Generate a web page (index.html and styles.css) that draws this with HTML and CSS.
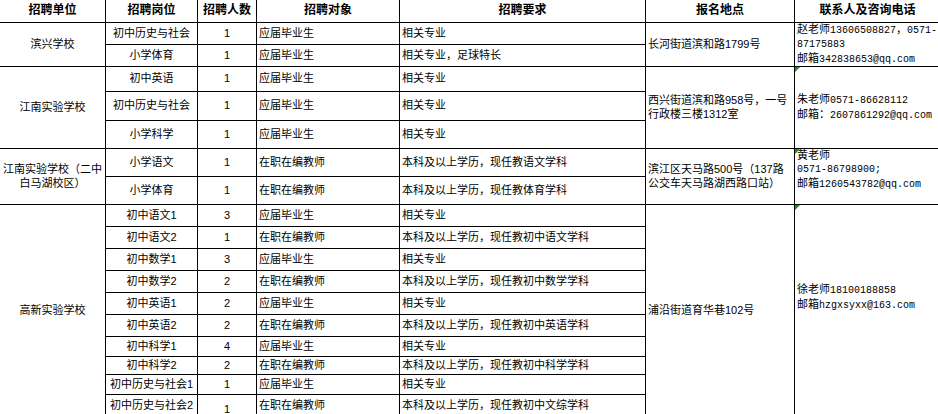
FILE: index.html
```html
<!DOCTYPE html>
<html lang="zh">
<head>
<meta charset="utf-8">
<title>招聘</title>
<link rel="stylesheet" href="styles.css">
</head>
<body>
<div class="sheet">
  <div class="c h">招聘单位</div>
  <div class="c h">招聘岗位</div>
  <div class="c h">招聘人数</div>
  <div class="c h">招聘对象</div>
  <div class="c h">招聘要求</div>
  <div class="c h">报名地点</div>
  <div class="c h">联系人及咨询电话</div>

  <div class="c ctr s2">滨兴学校</div>
  <div class="c ctr">初中历史与社会</div>
  <div class="c ctr">1</div>
  <div class="c l">应届毕业生</div>
  <div class="c l">相关专业</div>
  <div class="c l s2">长河街道滨和路1799号</div>
  <div class="c l s2"><div>赵老师<span class="m">13606508827</span>，<span class="m">0571-</span><br><span class="m">87175883</span><br>邮箱<span class="m">342838653@qq.com</span></div></div>

  <div class="c ctr">小学体育</div>
  <div class="c ctr">1</div>
  <div class="c l">应届毕业生</div>
  <div class="c l">相关专业，足球特长</div>

  <div class="c ctr s3">江南实验学校</div>
  <div class="c ctr">初中英语</div>
  <div class="c ctr">1</div>
  <div class="c l">应届毕业生</div>
  <div class="c l">相关专业</div>
  <div class="c l s3"><div>西兴街道滨和路958号，一号<br>行政楼三楼1312室</div></div>
  <div class="c l s3 note"><div>朱老师<span class="m">0571-86628112</span><br>邮箱：<span class="m">2607861292@qq.com</span></div></div>

  <div class="c ctr">初中历史与社会</div>
  <div class="c ctr">1</div>
  <div class="c l">应届毕业生</div>
  <div class="c l">相关专业</div>

  <div class="c ctr">小学科学</div>
  <div class="c ctr">1</div>
  <div class="c l">应届毕业生</div>
  <div class="c l">相关专业</div>

  <div class="c ctr s2"><div class="tc">江南实验学校（二中<br>白马湖校区）</div></div>
  <div class="c ctr">小学语文</div>
  <div class="c ctr">1</div>
  <div class="c l">在职在编教师</div>
  <div class="c l">本科及以上学历，现任教语文学科</div>
  <div class="c l s2"><div>滨江区天马路500号（137路<br>公交车天马路湖西路口站）</div></div>
  <div class="c l s2 note pad1"><div>黄老师<br><span class="m">0571-86798900;</span><br>邮箱<span class="m">1260543782@qq.com</span></div></div>

  <div class="c ctr">小学体育</div>
  <div class="c ctr">1</div>
  <div class="c l">在职在编教师</div>
  <div class="c l">本科及以上学历，现任教体育学科</div>

  <div class="c ctr s10">高新实验学校</div>
  <div class="c ctr">初中语文1</div>
  <div class="c ctr">3</div>
  <div class="c l">应届毕业生</div>
  <div class="c l">相关专业</div>
  <div class="c l s10">浦沿街道育华巷102号</div>
  <div class="c l s10 note pad2"><div>徐老师<span class="m">18100188858</span><br>邮箱<span class="m">hzgxsyxx@163.com</span></div></div>

  <div class="c ctr">初中语文2</div>
  <div class="c ctr">1</div>
  <div class="c l">在职在编教师</div>
  <div class="c l">本科及以上学历，现任教初中语文学科</div>

  <div class="c ctr">初中数学1</div>
  <div class="c ctr">3</div>
  <div class="c l">应届毕业生</div>
  <div class="c l">相关专业</div>

  <div class="c ctr">初中数学2</div>
  <div class="c ctr">2</div>
  <div class="c l">在职在编教师</div>
  <div class="c l">本科及以上学历，现任教初中数学学科</div>

  <div class="c ctr">初中英语1</div>
  <div class="c ctr">2</div>
  <div class="c l">应届毕业生</div>
  <div class="c l">相关专业</div>

  <div class="c ctr">初中英语2</div>
  <div class="c ctr">2</div>
  <div class="c l">在职在编教师</div>
  <div class="c l">本科及以上学历，现任教初中英语学科</div>

  <div class="c ctr">初中科学1</div>
  <div class="c ctr">4</div>
  <div class="c l">应届毕业生</div>
  <div class="c l">相关专业</div>

  <div class="c ctr">初中科学2</div>
  <div class="c ctr">2</div>
  <div class="c l">在职在编教师</div>
  <div class="c l">本科及以上学历，现任教初中科学学科</div>

  <div class="c ctr">初中历史与社会1</div>
  <div class="c ctr">1</div>
  <div class="c l">应届毕业生</div>
  <div class="c l">相关专业</div>

  <div class="c ctr">初中历史与社会2</div>
  <div class="c ctr low">1</div>
  <div class="c l">在职在编教师</div>
  <div class="c l">本科及以上学历，现任教初中文综学科</div>
</div>
</body>
</html>
```

FILE: styles.css
```css
html, body {
  margin: 0;
  padding: 0;
  background: #fff;
  overflow: hidden;
}

body {
  width: 938px;
  height: 414px;
  font-family: "Liberation Sans", "Noto Sans CJK SC", sans-serif;
  font-size: 11px;
  line-height: 13.5px;
  color: #000;
}

.sheet {
  display: grid;
  grid-template-columns: 106px 92px 59px 143px 246px 149px 146px;
  grid-template-rows: 23px 22px 22px 25px 29px 28px 28px 28px 22px 22px 22px 22px 22px 22px 20px 18px 20px 23px;
  width: 941px;
}

.c {
  box-sizing: border-box;
  border-right: 1px solid #000;
  border-bottom: 1px solid #000;
  display: flex;
  align-items: center;
  white-space: nowrap;
  overflow: hidden;
  position: relative;
}

.h {
  justify-content: center;
  font-weight: bold;
  font-size: 12px;
}

.ctr {
  justify-content: center;
}

.tc {
  text-align: center;
}

.l {
  justify-content: flex-start;
  padding-left: 2px;
}

.s2 { grid-row: span 2; }
.s3 { grid-row: span 3; }
.s10 { grid-row: span 10; }

.m {
  font-family: "Liberation Mono", monospace;
  font-size: 10px;
}

.note::before {
  content: "";
  position: absolute;
  left: 0;
  top: 0;
  border-top: 5px solid #1e8c1e;
  border-right: 5px solid transparent;
}

.pad1 { padding-bottom: 13px; }
.pad2 { padding-bottom: 27px; }

.low { padding-top: 7px; }
```
